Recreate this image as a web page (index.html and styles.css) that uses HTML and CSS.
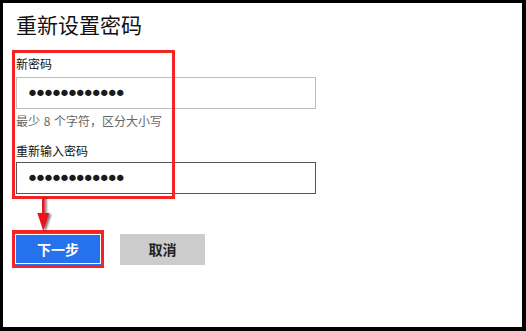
FILE: index.html
```html
<!DOCTYPE html>
<html lang="zh-CN">
<head>
  <meta charset="UTF-8">
  <title>重新设置密码</title>
  <link rel="stylesheet" href="styles.css">
</head>
<body>
<div class="frame">
  <h1 class="title">重新设置密码</h1>

  <div class="field">
    <label class="label" for="pwd">新密码</label>
    <input class="pwd" type="password" id="pwd" value="abcdefghijkl">
    <div class="hint">最少 8 个字符，区分大小写</div>
  </div>

  <div class="field field-second">
    <label class="label" for="pwd2">重新输入密码</label>
    <input class="pwd pwd-focus" type="password" id="pwd2" value="abcdefghijkl">
  </div>

  <div class="actions">
    <button class="btn btn-next">下一步</button>
    <button class="btn btn-cancel">取消</button>
  </div>

  <!-- annotations -->
  <div class="mark mark-fields"></div>
  <div class="mark mark-next"></div>
  <svg class="arrow" width="16" height="36" viewBox="0 0 16 36">
    <defs>
      <filter id="sh" x="-50%" y="-20%" width="200%" height="150%">
        <feDropShadow dx="2" dy="1" stdDeviation="1.2" flood-color="#000" flood-opacity="0.55"/>
      </filter>
    </defs>
    <g filter="url(#sh)" fill="#e8141b">
      <rect x="5" y="0" width="2.6" height="20"/>
      <polygon points="0.3,16 12.3,16 6.3,34"/>
    </g>
  </svg>
</div>
</body>
</html>
```

FILE: styles.css
```css
html, body {
  margin: 0;
  padding: 0;
  background: #000;
}
.frame {
  position: relative;
  box-sizing: border-box;
  width: 526px;
  height: 331px;
  border-style: solid;
  border-color: #000;
  border-width: 3px 4px 4px 3px;
  background: #fff;
  padding: 8px 0 0 13px;
  font-family: "Noto Sans CJK SC", "Liberation Sans", sans-serif;
  color: #1a1a1a;
}
.title {
  margin: 0;
  font-size: 21px;
  line-height: 26px;
  font-weight: normal;
  color: #111;
}
.field {
  display: flex;
  flex-direction: column;
  align-items: flex-start;
  margin-top: 18px;
}
.field-second {
  margin-top: 12px;
}
.label {
  font-size: 12px;
  line-height: 18px;
  color: #111;
}
.pwd {
  box-sizing: border-box;
  width: 300px;
  height: 32px;
  margin: 4px 0 0;
  padding: 0 0 0 9px;
  border: 1px solid #bdbdbd;
  outline: none;
  font-family: "DejaVu Sans", sans-serif;
  font-size: 22px;
  letter-spacing: -5px;
  color: #1b1b1b;
  background: #fff;
}
.field-second .pwd {
  margin-top: 2px;
}
.pwd-focus {
  border-color: #555;
}
.hint {
  margin-top: 3px;
  font-size: 12px;
  line-height: 18px;
  word-spacing: 1px;
  color: #666;
}
.actions {
  display: flex;
  align-items: center;
  gap: 18px;
  margin-top: 39px;
  margin-left: -2px;
}
.btn {
  height: 32px;
  border: none;
  padding: 0;
  font-family: "Noto Sans CJK SC", sans-serif;
  font-size: 14px;
  font-weight: bold;
  cursor: pointer;
}
.btn-next {
  width: 88px;
  background: #2672ec;
  color: #fff;
  box-shadow: inset 0 0 0 1px #2672ec, inset 0 0 0 2px #fff;
}
.btn-cancel {
  width: 85px;
  height: 31px;
  background: #cccccc;
  color: #222;
}
.mark {
  position: absolute;
  box-sizing: border-box;
  border: 3px solid #f42424;
}
.mark-fields {
  left: 9px;
  top: 47px;
  width: 163px;
  height: 149px;
}
.mark-next {
  left: 9px;
  top: 227px;
  width: 92px;
  height: 38px;
}
.arrow {
  position: absolute;
  left: 34px;
  top: 194px;
}
```
